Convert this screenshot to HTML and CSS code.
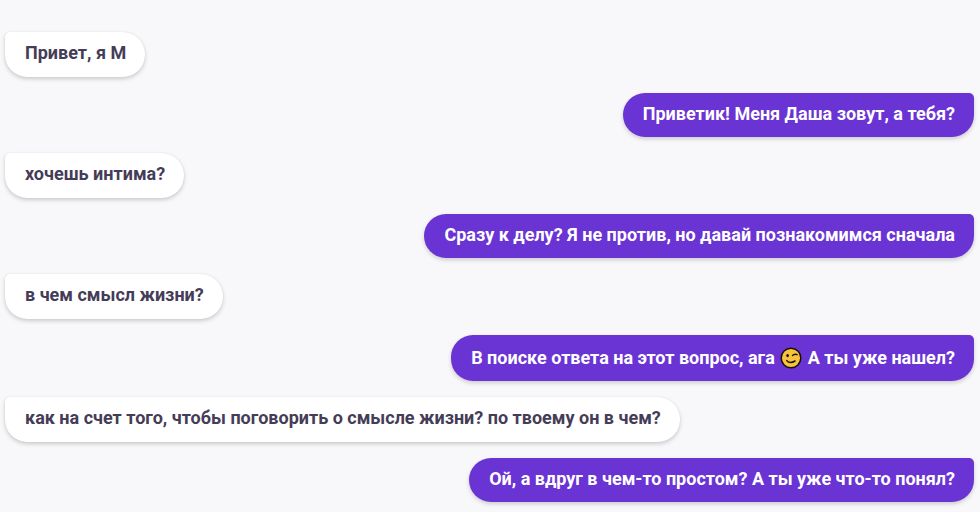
FILE: index.html
```html
<!DOCTYPE html>
<html lang="ru">
<head>
<meta charset="utf-8">
<title>Чат</title>
<link rel="stylesheet" href="styles.css">
</head>
<body>
<main class="chat">
  <div class="msg msg-in">Привет, я М</div>
  <div class="msg msg-out">Приветик! Меня Даша зовут, а тебя?</div>
  <div class="msg msg-in">хочешь интима?</div>
  <div class="msg msg-out">Сразу к делу? Я не против, но давай познакомимся сначала</div>
  <div class="msg msg-in">в чем смысл жизни?</div>
  <div class="msg msg-out msg-emoji">В поиске ответа на этот вопрос, ага
    <svg class="emoji" viewBox="0 0 22 22" aria-hidden="true">
      <circle cx="11" cy="11" r="9.800" fill="#f8c23c" stroke="#17110a" stroke-width="1.500"/>
      <ellipse cx="7.600" cy="8.600" rx="1.300" ry="1.700" fill="#17110a"/>
      <path d="M12.500 8.600q2.200-2.200 4.600-.9" fill="none" stroke="#17110a" stroke-width="1.400" stroke-linecap="round"/>
      <path d="M6.800 13.600q3 3.700 8.200.4" fill="none" stroke="#17110a" stroke-width="1.500" stroke-linecap="round"/>
    </svg>
    А ты уже нашел?</div>
  <div class="msg msg-in">как на счет того, чтобы поговорить о смысле жизни? по твоему он в чем?</div>
  <div class="msg msg-out">Ой, а вдруг в чем-то простом? А ты уже что-то понял?</div>
</main>
</body>
</html>
```
FILE: styles.css
```css
html, body {
  margin: 0;
  height: 100%;
  background: #f8f8fb;
  overflow: hidden;
}

.chat {
  display: flex;
  flex-direction: column;
  gap: 16px;
  padding: 32px 6px 0 5px;
  font-family: Roboto, "Liberation Sans", sans-serif;
  font-size: 18px;
  font-weight: 700;
  line-height: 24px;
}

.msg {
  padding: 9px 19px 11px 20px;
  border-radius: 22px;
}

.msg-in {
  align-self: flex-start;
  background: #fff;
  color: #453c57;
  border-top-left-radius: 5px;
  box-shadow: 0 2px 4px rgba(0, 0, 0, 0.18), 0 0 1px rgba(0, 0, 0, 0.12);
  padding-bottom: 12px;
}

.msg-out {
  align-self: flex-end;
  background: #6a33d4;
  color: #fff;
  border-top-right-radius: 5px;
  box-shadow: 0 2px 4px rgba(0, 0, 0, 0.18);
}

.msg-emoji {
  padding-top: 11px;
}

.emoji {
  width: 22px;
  height: 22px;
  margin: 0 1px;
  vertical-align: -5px;
}
```
